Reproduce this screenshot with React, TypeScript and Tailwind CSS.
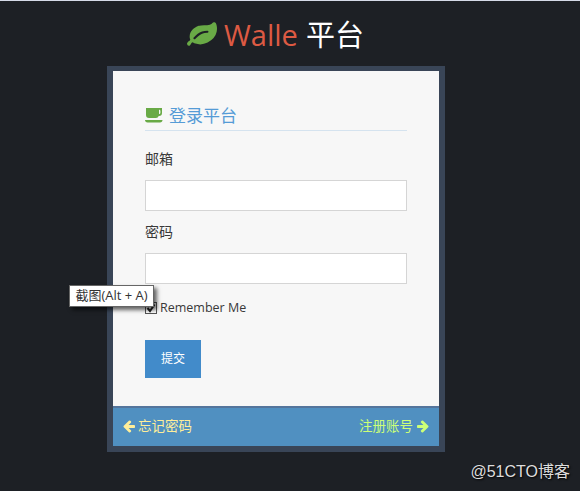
const FONT = '"Open Sans", "Noto Sans CJK SC", sans-serif'

function LeafIcon() {
  return (
    <svg viewBox="0 0 1792 1792" className="w-[30px] h-[30px] mr-[7px] fill-[#69aa46]">
      <path d="M1280 704q0-26-19-45t-45-19q-172 0-318 49.5t-259.5 134-235.5 219.5q-19 21-19 45 0 26 19 45t45 19q24 0 45-19 27-24 74-71t67-66q137-124 268.5-176t313.5-52q26 0 45-19t19-45zm512-198q0 95-20 193-46 224-184.5 383t-357.5 268q-214 108-438 108-148 0-286-47-15-5-88-42t-96-37q-16 0-39.5 32t-45 70-52.5 70-60 32q-30 0-51-11t-31-24-27-42q-2-4-6-11t-5.5-10-3-9.5-1.5-13.5q0-35 31-73.5t68-65.5 68-56 31-48q0-4-14-38t-16-44q-9-51-9-104 0-115 43.5-220t119-184.5 170.5-139 204-95.5q55-18 145-25.5t179.5-9 178.5-6 163.5-24 113.5-56.5l29.5-29.5 29.5-28 27-20 36.5-16 43.5-4.5q39 0 70.5 46t47.5 112 24 124 8 96z" />
    </svg>
  )
}

function CoffeeIcon() {
  return (
    <svg viewBox="0 0 18 15" className="w-[18px] h-[15px] mr-[6px] fill-[#69aa46]">
      <path fillRule="evenodd" d="M1 0h16v.5a1 1 0 0 1 0 .5v4a3 3 0 0 1-3 3h-.3a3 3 0 0 1-2.700 2H4a3 3 0 0 1-3-3V0zm13 1.800V6h.2A1.200 1.200 0 0 0 15.400 4.800V3a1.200 1.200 0 0 0-1.200-1.200H14z" />
      <path d="M0 12h17.500c0 1.500-1 2.500-2.500 2.500H2.500C1 14.500 0 13.500 0 12z" />
    </svg>
  )
}

function ArrowLeft({ className }: { className: string }) {
  return (
    <svg viewBox="0 0 1792 1792" className={className} fill="currentColor">
      <path d="M1664 896v128q0 53-32.500 90.500t-84.500 37.500h-704l293 294q38 36 38 90t-38 90l-75 76q-37 37-90 37-52 0-91-37l-651-652q-37-37-37-90 0-52 37-91l651-650q38-38 91-38 52 0 90 38l75 74q38 38 38 91t-38 91l-293 293h704q52 0 84.500 37.500t32.500 90.500z" />
    </svg>
  )
}

function ArrowRight({ className }: { className: string }) {
  return (
    <svg viewBox="0 0 1792 1792" className={className} fill="currentColor">
      <path d="M1600 960q0 54-37 91l-651 651q-39 37-91 37-51 0-90-37l-75-75q-38-38-38-91t38-91l293-293h-704q-52 0-84.500-37.500t-32.500-90.500v-128q0-53 32.500-90.500t84.500-37.500h704l-293-294q-38-36-38-90t38-90l75-75q38-38 90-38 53 0 91 38l651 651q37 35 37 90z" />
    </svg>
  )
}

export default function App() {
  return (
    <div className="relative w-[580px] h-[491px] overflow-hidden bg-[#1d2025] border-t border-[#d5dbe8] text-[13px] text-[#393939]" style={{ fontFamily: FONT }}>
      <h1 className="h-[65px] pt-[2px] flex justify-center items-center text-[29px] font-normal leading-[40px] pr-[29px]">
        <LeafIcon />
        <span className="text-[#dd5a43]">Walle</span>
        <span className="text-white ml-[8px]">平台</span>
      </h1>

      <div className="w-[338px] ml-[107px] border-[6px] border-t-[5px] border-[#394557] bg-[#f7f7f7]">
        <div className="h-[335px] px-[32px] pt-[30px]">
          <h4 className="h-[30px] flex items-center border-b border-[#d5e3ef] text-[#559bd6] text-[17px] leading-[28px]">
            <CoffeeIcon />
            登录平台
          </h4>

          <label className="block mt-[19px] leading-[18px] text-[14px]">邮箱</label>
          <input className="block w-full h-[31px] mt-[12px] bg-white border border-[#d5d5d5]" />

          <label className="block mt-[12px] leading-[18px] text-[14px]">密码</label>
          <input className="block w-full h-[31px] mt-[12px] bg-white border border-[#d5d5d5]" />

          <div className="flex items-center mt-[15px] h-[18px]">
            <span className="w-[12px] h-[12px] mr-[3px] bg-white border border-[#555] flex items-center justify-center">
              <svg viewBox="0 0 10 10" className="w-[10px] h-[10px]">
                <path d="M1.500 5 L4 8 L8.500 1.500" fill="none" stroke="#222" strokeWidth="2" />
              </svg>
            </span>
            <span className="text-[12.5px]">Remember Me</span>
          </div>

          <button className="block w-[56px] h-[38px] mt-[23px] bg-[#428bca] text-white text-[12px]">提交</button>
        </div>

        <div className="h-[40px] pb-[2px] flex items-center justify-between px-[9px] bg-[#5090c1] border-t-2 border-[#54759c] text-[13.5px]">
          <a className="flex items-center text-[#fe9]">
            <ArrowLeft className="w-[14px] h-[14px] mr-[2px]" />
            忘记密码
          </a>
          <a className="flex items-center text-[#cf7]">
            注册账号
            <ArrowRight className="w-[14px] h-[14px] ml-[3px]" />
          </a>
        </div>
      </div>

      {/* screenshot tool tooltip */}
      <div className="absolute left-[69px] top-[284px] w-[85px] h-[22px] flex items-center justify-center bg-white border border-[#666] shadow-[3px_3px_4px_rgba(0,0,0,0.6)] text-[13px] text-[#333]">
        截图(Alt + A)
      </div>

      {/* watermark */}
      <div className="absolute right-[10px] top-[462px] text-[16px] leading-[18px] text-[#ddd] [text-shadow:1px_1px_2px_#000]" style={{ fontFamily: '"Liberation Sans", "Noto Sans CJK SC", sans-serif' }}>
        @51CTO博客
      </div>
    </div>
  )
}
